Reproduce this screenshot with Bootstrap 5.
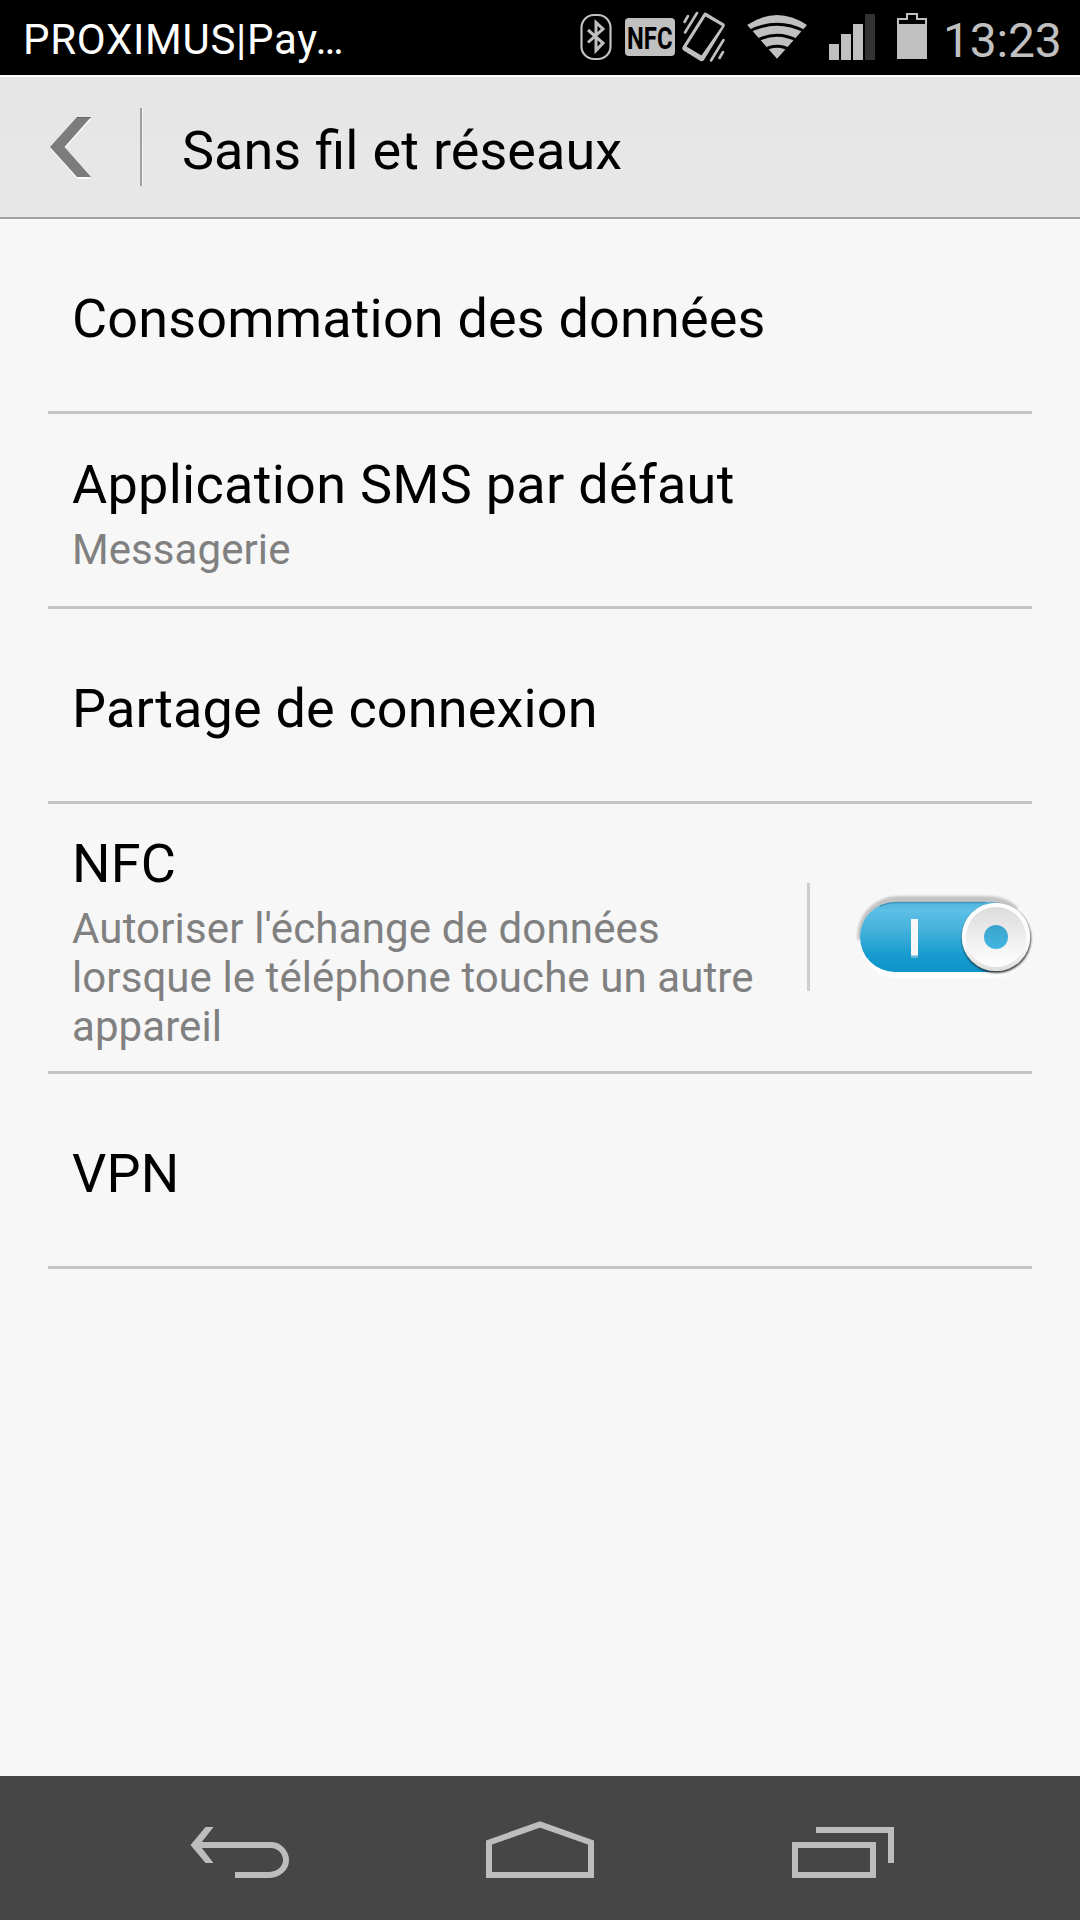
<!DOCTYPE html>
<html lang="fr">
<head>
<meta charset="utf-8">
<meta name="viewport" content="width=device-width, initial-scale=1">
<title>Sans fil et réseaux</title>
<link href="https://cdn.jsdelivr.net/npm/bootstrap@5.3.0/dist/css/bootstrap.min.css" rel="stylesheet">
<style>
body{font-family:Roboto,"Liberation Sans",sans-serif;background:#f7f7f7;color:#000;height:1920px;overflow:hidden}
svg{display:block;flex:none}
.status{height:75px;background:#000;color:#c0c0c0;padding-left:23px}
.carrier{font-size:42px;line-height:49px;color:#fff;padding-top:4px;letter-spacing:.7px}
.clock{font-size:48px;line-height:56px;width:140px;padding:7px 0 0 3px;letter-spacing:-.2px}
.topbar{height:144px;background:linear-gradient(#e5e5e5,#e8e8e8);border-top:2px solid #fff;border-bottom:2px solid #a0a0a0}
.page-title{font-size:54px;line-height:63px;padding-top:6px;margin-left:40px;word-spacing:.8px}
.vline{width:2px;height:78px;background:#a0a0a0;box-shadow:1px 0 #f4f4f4}
.settings{margin:0 48px}
.entry{height:195px;border-bottom:3px solid #c4c4c4;padding:68px 24px 0}
.entry.two{padding-top:39px}
.entry.tall{height:270px;padding-top:28px}
.label{font-size:54px;line-height:63px;white-space:nowrap;letter-spacing:.16px}
.entry.two .label{letter-spacing:.28px}
.hint{font-size:42px;line-height:49px;color:#808080;margin-top:9px;white-space:nowrap;letter-spacing:.08px}
.hint .wider{letter-spacing:.15px}
.entry.tall .sw{margin:51px -24px 0 0}
.navkeys{height:144px;background:#464646}
</style>
<script src="https://cdn.jsdelivr.net/npm/bootstrap@5.3.0/dist/js/bootstrap.bundle.min.js"></script>
</head>
<body class="d-flex flex-column">
<div class="status d-flex align-items-center flex-shrink-0">
  <div class="carrier me-auto">PROXIMUS|Pay…</div>
  <svg width="42" height="75" viewBox="576 0 42 75" fill="none" stroke="#c0c0c0"><rect x="581.5" y="15" width="29" height="44" rx="12.5" stroke-width="2.200"/><path d="M588 30l15 13-7 7.500V22.500l7 6.500L588 42.500" stroke-width="3"/></svg>
  <svg width="60" height="75" viewBox="618 0 60 75"><rect x="625" y="18" width="50" height="38" rx="4" fill="#c0c0c0"/><text x="627" y="49" font-size="30.500" font-weight="700" font-family="Roboto" textLength="45.500" lengthAdjust="spacingAndGlyphs">NFC</text></svg>
  <svg width="57" height="75" viewBox="678 0 57 75"><path fill="#c0c0c0" fill-rule="evenodd" d="M704 13q1-1 2.500 0l17.500 10.500q1.500 1 .5 3L704 60q-1.500 2-3.500 1l-17-10.500q-2-1.500-1-3.500zM705.500 16.500L686.500 46.500l15 9L722 26z"/><path d="M697 13l-12 19.500M688 16l-3.500 6M723.500 40L711 60.500M723 52l-3.500 6" stroke="#c0c0c0" stroke-width="2.600" stroke-linecap="round"/></svg>
  <svg width="85" height="75" viewBox="735 0 85 75" fill="#c0c0c0"><clipPath id="fan"><path d="M777 59L747 25V5h61v20z"/></clipPath><g clip-path="url(#fan)"><path d="M777 59L747 25q30-20 60 0z"/><g fill="none" stroke="#000" stroke-width="3"><path d="M749 31.500q28-14.500 56 0M756 41q21-11.500 42 0M763 50.500q14-8.500 28 0"/></g></g></svg>
  <svg width="65" height="75" viewBox="820 0 65 75" fill="#c0c0c0"><path d="M829 44h10v16h-10zM841 34h10v26h-10zM853 24h10v36h-10z"/><path d="M865 14h10v46h-10z" fill="#333"/></svg>
  <svg width="55" height="75" viewBox="885 0 55 75"><path d="M898 24v-5h9v-5h10v5h9v5" fill="none" stroke="#c0c0c0" stroke-width="2"/><path d="M897 24h30v35h-30z" fill="#c0c0c0"/></svg>
  <div class="clock">13:23</div>
</div>
<header class="topbar d-flex align-items-center flex-shrink-0">
  <svg width="140" height="140" viewBox="0 77 140 140"><path d="M50.500 149L77.500 179H91L64.500 149 91 119H77.500z" fill="#fff"/><path d="M50 147L77 117H91L64.500 147 91 177H77z" fill="#7c7c7c"/><path d="M77 117.500h13.500" stroke="#666"/></svg>
  <div class="vline"></div>
  <h1 class="page-title mb-0 fw-normal">Sans fil et réseaux</h1>
</header>
<main class="settings flex-grow-1">
  <div class="entry"><div class="label">Consommation des données</div></div>
  <div class="entry two"><div class="label">Application SMS par défaut</div><div class="hint">Messagerie</div></div>
  <div class="entry"><div class="label">Partage de connexion</div></div>
  <div class="entry tall d-flex justify-content-between">
    <div><div class="label">NFC</div><div class="hint"><span class="wider">Autoriser l'échange de données</span><br>lorsque le téléphone touche un autre<br>appareil</div></div>
    <svg class="sw" width="225" height="108" viewBox="807 883 225 108" overflow="visible">
      <defs>
        <linearGradient id="blue" x1="0" y1="0" x2="0" y2="1"><stop offset="0" stop-color="#4fb4dc"/><stop offset=".12" stop-color="#5cbfe5"/><stop offset=".35" stop-color="#4ab4dd"/><stop offset=".75" stop-color="#189ccf"/><stop offset="1" stop-color="#0d94ca"/></linearGradient>
        <linearGradient id="face" x1="0" y1="0" x2="0" y2="1"><stop offset="0" stop-color="#dcdcdc"/><stop offset="1" stop-color="#fff"/></linearGradient>
        <linearGradient id="rim" x1="0" y1="0" x2="0" y2="1"><stop offset="0" stop-color="#fff"/><stop offset=".6" stop-color="#fafafa"/><stop offset="1" stop-color="#ddd"/></linearGradient>
        <linearGradient id="dot" x1="0" y1="0" x2="0" y2="1"><stop offset="0" stop-color="#39a3cc"/><stop offset="1" stop-color="#43b6e1"/></linearGradient>
        <filter id="b1"><feGaussianBlur stdDeviation="1.300"/></filter>
        <filter id="b2" x="-20%" y="-20%" width="140%" height="140%"><feGaussianBlur stdDeviation="1"/></filter>
      </defs>
      <path d="M807 883h3v108h-3z" fill="#cecece"/>
      <rect x="862" y="908" width="166" height="70" rx="35" fill="#fff" filter="url(#b1)"/>
      <path d="M857.500 940C856 914 875 896 900 896h85c16 0 26 4 33 12l-31 28H870z" fill="#c4c4c4" filter="url(#b1)"/>
      <rect x="860" y="902" width="168" height="70" rx="35" fill="url(#blue)"/>
      <path d="M880 906q8-3.500 16-3.500h90" fill="none" stroke="#3e88a7" stroke-width="1.500" opacity=".7"/>
      <path d="M911 919h7v37h-7z" fill="#f7f7f7"/><path d="M911 955.500h7v2.500h-7z" fill="#62b9dc"/>
      <circle cx="996.500" cy="938.500" r="34.300" fill="#222" filter="url(#b2)"/>
      <circle cx="996" cy="937" r="34.300" fill="url(#rim)"/>
      <circle cx="996" cy="937" r="30" fill="url(#face)"/>
      <circle cx="996" cy="937" r="12" fill="url(#dot)"/>
    </svg>
  </div>
  <div class="entry"><div class="label">VPN</div></div>
</main>
<nav class="navkeys flex-shrink-0 d-flex">
  <svg width="390" height="144" viewBox="0 1776 390 144" fill="none" stroke="#bdbdbd" stroke-width="6"><path d="M199 1845h72c8 0 15 7 15 15s-7 15-18 15h-33"/><path d="M190.500 1845L205.500 1827H213.500L199.500 1845 213.500 1863H205.500z" fill="#bdbdbd" stroke="none"/></svg>
  <svg width="300" height="144" viewBox="390 1776 300 144" fill="none" stroke="#bdbdbd" stroke-width="6"><path d="M489 1842.500V1875H591V1842.500L540 1824.500z"/></svg>
  <svg width="390" height="144" viewBox="690 1776 390 144" fill="none" stroke="#bdbdbd" stroke-width="6"><path d="M795 1845h78v30h-78zM816 1830h75v33"/></svg>
</nav>
</body>
</html>
